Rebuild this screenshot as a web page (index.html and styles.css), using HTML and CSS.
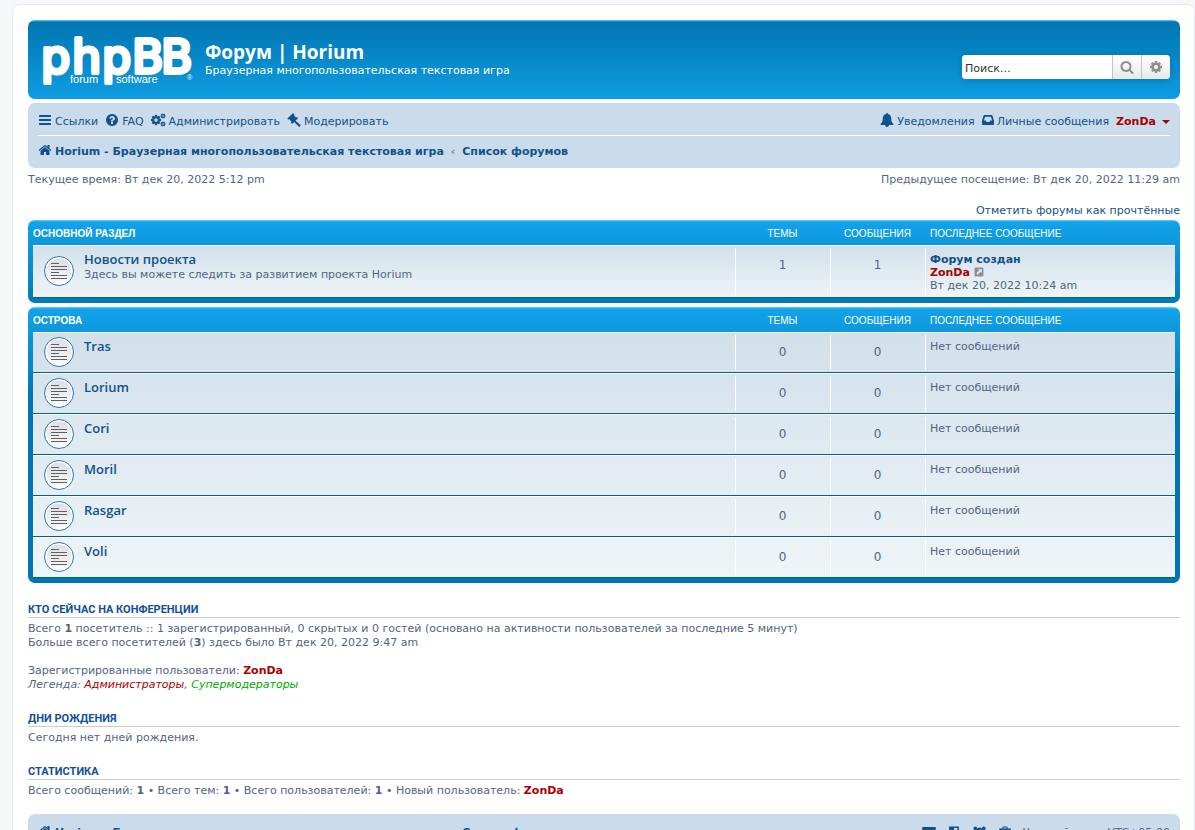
FILE: index.html
```html
<!DOCTYPE html>
<html lang="ru">
<head>
<meta charset="utf-8">
<title>Форум | Horium</title>
<link rel="stylesheet" href="styles.css">
</head>
<body>
<svg class="sprite" aria-hidden="true">
  <symbol id="bars" viewBox="0 0 1792 1792"><path d="M1664 1344v128q0 26-19 45t-45 19h-1408q-26 0-45-19t-19-45v-128q0-26 19-45t45-19h1408q26 0 45 19t19 45zm0-512v128q0 26-19 45t-45 19h-1408q-26 0-45-19t-19-45v-128q0-26 19-45t45-19h1408q26 0 45 19t19 45zm0-512v128q0 26-19 45t-45 19h-1408q-26 0-45-19t-19-45v-128q0-26 19-45t45-19h1408q26 0 45 19t19 45z"/></symbol>
  <symbol id="question" viewBox="0 0 1792 1792"><path d="M1024 1376v-192q0-14-9-23t-23-9h-192q-14 0-23 9t-9 23v192q0 14 9 23t23 9h192q14 0 23-9t9-23zm256-672q0-88-55.500-163t-138.500-116-170-41q-243 0-371 213-15 24 8 42l132 100q7 6 19 6 16 0 25-12 53-68 86-92 34-24 86-24 48 0 85.500 26t37.500 59q0 38-20 61t-68 45q-63 28-115.500 86.500t-52.500 125.500v36q0 14 9 23t23 9h192q14 0 23-9t9-23q0-19 21.500-49.500t54.500-49.500q32-18 49-28.500t46-35 44.500-48 28-60.500 12.500-81zm384 192q0 209-103 385.500t-279.500 279.500-385.500 103-385.500-103-279.500-279.500-103-385.500 103-385.500 279.500-279.500 385.500-103 385.500 103 279.500 279.500 103 385.500z"/></symbol>
  <symbol id="home" viewBox="0 0 1792 1792"><path d="M1472 992v480q0 26-19 45t-45 19h-384v-384h-256v384h-384q-26 0-45-19t-19-45v-480q0-1 .5-3t.5-3l575-474 575 474q1 2 1 6zm223-69l-62 74q-8 9-21 11h-3q-13 0-21-7l-692-577-692 577q-12 8-24 7-13-2-21-11l-62-74q-8-10-7-23.500t11-21.500l719-599q32-26 76-26t76 26l244 204v-195q0-14 9-23t23-9h192q14 0 23 9t9 23v408l219 182q10 8 11 21.500t-7 23.500z"/></symbol>
  <symbol id="search" viewBox="0 0 1792 1792"><path d="M1216 832q0-185-131.500-316.500t-316.500-131.500-316.500 131.500-131.500 316.500 131.500 316.500 316.500 131.500 316.500-131.500 131.500-316.500zm512 832q0 52-38 90t-90 38q-54 0-90-38l-343-342q-179 124-399 124-143 0-273.500-55.500t-225-150-150-225-55.500-273.500 55.500-273.500 150-225 225-150 273.500-55.500 273.500 55.500 225 150 150 225 55.500 273.500q0 220-124 399l343 343q37 37 37 90z"/></symbol>
  <symbol id="cog" viewBox="0 0 1792 1792"><path d="M1152 896q0-106-75-181t-181-75-181 75-75 181 75 181 181 75 181-75 75-181zm512-109v222q0 12-8 23t-20 13l-185 28q-19 54-39 91 35 50 107 138 10 12 10 25t-9 23q-27 37-99 108t-94 71q-12 0-26-9l-138-108q-44 23-91 38-16 136-29 186-7 28-36 28h-222q-14 0-24.500-8.500t-11.500-21.500l-28-184q-49-16-90-37l-141 107q-10 9-25 9-14 0-25-11-126-114-165-168-7-10-7-23 0-12 8-23 15-21 51-66.500t54-70.500q-27-50-41-99l-183-27q-13-2-21-12.500t-8-23.500v-222q0-12 8-23t19-13l186-28q14-46 39-92-40-57-107-138-10-12-10-24 0-10 9-23 26-36 98.500-107.500t94.500-71.500q13 0 26 10l138 107q44-23 91-38 16-136 29-186 7-28 36-28h222q14 0 24.500 8.500t11.500 21.500l28 184q49 16 90 37l142-107q9-9 24-9 13 0 25 10 129 119 165 170 7 8 7 22 0 12-8 23-15 21-51 66.500t-54 70.500q26 50 41 98l183 28q13 2 21 12.500t8 23.500z"/></symbol>
  <symbol id="cogs" viewBox="0 0 15 14">
    <svg x="-1" y="1" width="12" height="12" viewBox="0 0 1792 1792"><use href="#cog"/></svg>
    <svg x="9" y="0" width="6" height="6" viewBox="0 0 1792 1792"><use href="#cog"/></svg>
    <svg x="9" y="8" width="6" height="6" viewBox="0 0 1792 1792"><use href="#cog"/></svg>
  </symbol>
  <symbol id="gavel" viewBox="0 0 14 14"><path d="M0.400 5.600 5.600 0.400a.6.6 0 0 1 .9 0l.6.700a.6.6 0 0 1 0 .9l-.3.300 2.300 2.300.3-.3a.6.6 0 0 1 .9 0l.4.400a.6.6 0 0 1 0 .8L8.500 7.700l4.800 4.100a1 1 0 0 1 0 1.300l-.3.300a1 1 0 0 1-1.300 0L7.200 9l-1.600 1.600a.6.6 0 0 1-.9 0l-.5-.6a.6.6 0 0 1 0-.9l.3-.3L2 5.900l-.3.300a.6.6 0 0 1-.9 0z"/></symbol>
  <symbol id="bell" viewBox="0 0 14 14"><path d="M7 0a.9.900 0 0 1 .9 1c2.200.5 3.300 2.100 3.300 4.200 0 3.200.9 4.600 2.300 5.800 0 .6-.4 1-1 1H9a2 2 0 0 1-4 0H1.500c-.6 0-1-.4-1-1 1.400-1.200 2.300-2.600 2.300-5.800C2.800 3.100 3.900 1.500 6.100 1A.9.900 0 0 1 7 0z"/></symbol>
  <symbol id="inbox" viewBox="0 0 12 14"><path fill-rule="evenodd" d="M2.500 2h7c.5 0 .8.200 1 .7L11.800 7c.1.300.2.500.2.900v3.400c0 .5-.3.800-.8.800H.8a.8.800 0 0 1-.8-.8V7.900c0-.4.100-.600.200-.9l1.300-4.300c.2-.5.500-.7 1-.7zM3.100 3.700 1.900 7.400h1.900l.8 1.600h2.800l.8-1.600h1.900L8.900 3.700z"/></symbol>
  <symbol id="envelope" viewBox="0 0 14 14"><path d="M0 2.500C0 1.600.6 1 1.300 1h11.400c.7 0 1.300.6 1.300 1.500 0 .8-.6 1.600-1.300 2.100L8.300 7.700c-.9.600-1.700.6-2.600 0L1.300 4.600C.6 4.100 0 3.300 0 2.500zM0 5l5 3.600c1.400.9 2.600.9 4 0L14 5v6.700c0 .7-.6 1.300-1.300 1.300H1.300C.6 13 0 12.400 0 11.700z"/></symbol>
  <symbol id="shield" viewBox="0 0 14 14"><path fill-rule="evenodd" d="M2 0.500h10v7c0 3-2.500 5-5 6.500-2.500-1.500-5-3.500-5-6.500zm5 1.600v9.900c2-1.200 3.400-2.600 3.400-4.500V2.100z"/></symbol>
  <symbol id="users" viewBox="0 0 16 14"><circle cx="3.500" cy="2" r="2"/><circle cx="12.500" cy="2" r="2"/><circle cx="8" cy="4" r="3"/><path d="M0 6.500C0 5 .6 4 1.500 4 2.500 4.800 3.500 5 4.500 4.700 4.500 6 5 6.800 5.300 7H1.500C.6 7 0 7 0 6.500zM16 6.500C16 5 15.400 4 14.500 4c-1 .8-2 1-3 .7 0 1.300-.5 2.100-.8 2.300h3.800c.9 0 1.500 0 1.500-.5zM5 7.500c2 1.300 4 1.300 6 0 1.700 0 2.500 2 2.500 4.500 0 1.200-.7 2-2 2h-7c-1.300 0-2-.8-2-2 0-2.500.8-4.500 2.500-4.500z"/></symbol>
  <symbol id="trash" viewBox="0 0 14 14"><path fill-rule="evenodd" d="M5 .5h4l1 2h3v1.200h-1V12c0 1-.6 1.700-1.300 1.700H3.300C2.600 13.700 2 13 2 12V3.700H1V2.500h3zM5.700 1.500l-.5 1h3.600l-.5-1zM4.500 5.500v6h1v-6zm2 0v6h1v-6zm2 0v6h1v-6z"/></symbol>
  <symbol id="goto" viewBox="0 0 10 10"><path fill-rule="evenodd" d="M2 .5h6c.9 0 1.500.6 1.500 1.500v6c0 .9-.6 1.500-1.500 1.500H2C1.100 9.500.5 8.900.5 8V2C.5 1.100 1.100.5 2 .5zM4 2.200l1.200 1.200L2.300 6.300l1.400 1.400 2.900-2.900L7.800 6V2.200z"/></symbol>
  <symbol id="topic" viewBox="0 0 30 30">
    <circle cx="15" cy="15" r="14.500" fill="#fff" stroke="#2b75b5"/>
    <circle cx="15" cy="15" r="12.500" fill="url(#disc)"/>
    <path d="M7 7.500h8M7 10.500h16M7 13.500h16M7 16.500h8M7 19.500h16M7 22.500h16" stroke="#606060"/>
  </symbol>
  <linearGradient id="disc" x1="0" y1="0" x2="0" y2="1"><stop offset="0" stop-color="#dcdee4"/><stop offset="1" stop-color="#fbfbfc"/></linearGradient>
</svg>

<div class="wrap">
  <header class="headerbar">
    <a class="logo" href="#" aria-label="phpBB forum software">
      <svg width="152" height="52" viewBox="0 0 152 52">
        <text class="logo-name" x="-1 30 60 90 119" y="39">phpBB</text>
        <text class="logo-sub" x="28" y="49">forum</text>
        <text class="logo-sub" x="74" y="49">software</text>
        <text class="logo-reg" x="145" y="46">®</text>
      </svg>
    </a>
    <div class="site">
      <h1>Форум | Horium</h1>
      <p>Браузерная многопользовательская текстовая игра</p>
    </div>
    <form class="search">
      <input type="search" placeholder="Поиск…" aria-label="Поиск">
      <button type="button" aria-label="Поиск"><svg><use href="#search"/></svg></button>
      <button type="button" aria-label="Расширенный поиск"><svg><use href="#cog"/></svg></button>
    </form>
  </header>

  <nav class="navbar">
    <div class="nav-row nav-main">
      <a href="#"><svg><use href="#bars"/></svg>Ссылки</a>
      <a href="#"><svg><use href="#question"/></svg>FAQ</a>
      <a href="#"><svg class="wide"><use href="#cogs"/></svg>Администрировать</a>
      <a href="#"><svg><use href="#gavel"/></svg>Модерировать</a>
      <a href="#" class="push"><svg><use href="#bell"/></svg>Уведомления</a>
      <a href="#"><svg class="narrow"><use href="#inbox"/></svg>Личные сообщения</a>
      <a href="#" class="admin menu">ZonDa</a>
    </div>
    <div class="nav-row crumbs">
      <a href="#"><svg><use href="#home"/></svg>Horium - Браузерная многопользовательская текстовая игра</a>
      <span>‹</span>
      <a href="#">Список форумов</a>
    </div>
  </nav>

  <div class="times"><p>Текущее время: Вт дек 20, 2022 5:12 pm</p><p>Предыдущее посещение: Вт дек 20, 2022 11:29 am</p></div>
  <div class="actions"><a href="#">Отметить форумы как прочтённые</a></div>

  <main>
    <div class="forabg">
      <table>
        <colgroup><col class="c-icon"><col><col class="c-num"><col class="c-num"><col class="c-last"></colgroup>
        <thead><tr><th colspan="2" class="name">Основной раздел</th><th>Темы</th><th>Сообщения</th><th class="last">Последнее сообщение</th></tr></thead>
        <tbody>
          <tr class="tall"><td class="icon"><svg><use href="#topic"/></svg></td><td><a class="forum" href="#">Новости проекта</a><p>Здесь вы можете следить за развитием проекта Horium</p></td><td class="num">1</td><td class="num">1</td><td class="last"><a class="strong" href="#">Форум создан</a><br><a class="admin" href="#">ZonDa</a> <a class="goto" href="#" aria-label="Перейти к последнему сообщению"><svg><use href="#goto"/></svg></a><br>Вт дек 20, 2022 10:24 am</td></tr>
        </tbody>
      </table>
    </div>
    <div class="forabg">
      <table>
        <colgroup><col class="c-icon"><col><col class="c-num"><col class="c-num"><col class="c-last"></colgroup>
        <thead><tr><th colspan="2" class="name">Острова</th><th>Темы</th><th>Сообщения</th><th class="last">Последнее сообщение</th></tr></thead>
        <tbody>
          <tr><td class="icon"><svg><use href="#topic"/></svg></td><td><a class="forum" href="#">Tras</a></td><td class="num">0</td><td class="num">0</td><td class="last">Нет сообщений</td></tr>
          <tr><td class="icon"><svg><use href="#topic"/></svg></td><td><a class="forum" href="#">Lorium</a></td><td class="num">0</td><td class="num">0</td><td class="last">Нет сообщений</td></tr>
          <tr><td class="icon"><svg><use href="#topic"/></svg></td><td><a class="forum" href="#">Cori</a></td><td class="num">0</td><td class="num">0</td><td class="last">Нет сообщений</td></tr>
          <tr><td class="icon"><svg><use href="#topic"/></svg></td><td><a class="forum" href="#">Moril</a></td><td class="num">0</td><td class="num">0</td><td class="last">Нет сообщений</td></tr>
          <tr><td class="icon"><svg><use href="#topic"/></svg></td><td><a class="forum" href="#">Rasgar</a></td><td class="num">0</td><td class="num">0</td><td class="last">Нет сообщений</td></tr>
          <tr><td class="icon"><svg><use href="#topic"/></svg></td><td><a class="forum" href="#">Voli</a></td><td class="num">0</td><td class="num">0</td><td class="last">Нет сообщений</td></tr>
        </tbody>
      </table>
    </div>

    <section class="info">
      <h3>Кто сейчас на конференции</h3>
      <p>Всего <strong>1</strong> посетитель :: 1 зарегистрированный, 0 скрытых и 0 гостей (основано на активности пользователей за последние 5 минут)<br>Больше всего посетителей (<strong>3</strong>) здесь было Вт дек 20, 2022 9:47 am</p>
      <p>Зарегистрированные пользователи: <a class="admin" href="#">ZonDa</a><br><em>Легенда: <a class="role-admin" href="#">Администраторы</a>, <a class="role-mod" href="#">Супермодераторы</a></em></p>
    </section>
    <section class="info">
      <h3>Дни рождения</h3>
      <p>Сегодня нет дней рождения.</p>
    </section>
    <section class="info">
      <h3>Статистика</h3>
      <p>Всего сообщений: <strong>1</strong> • Всего тем: <strong>1</strong> • Всего пользователей: <strong>1</strong> • Новый пользователь: <a class="admin" href="#">ZonDa</a></p>
    </section>
  </main>

  <footer class="navbar foot">
    <div class="nav-row crumbs">
      <a href="#"><svg><use href="#home"/></svg>Horium - Браузерная многопользовательская текстовая игра</a>
      <span>‹</span>
      <a href="#">Список форумов</a>
      <div class="tools">
        <a href="#" aria-label="Связаться с администрацией"><svg><use href="#envelope"/></svg></a>
        <a href="#" aria-label="Наша команда"><svg><use href="#shield"/></svg></a>
        <a href="#" aria-label="Пользователи"><svg class="wide"><use href="#users"/></svg></a>
        <a href="#" aria-label="Удалить cookies"><svg><use href="#trash"/></svg></a>
        <span>Часовой пояс: UTC+05:00</span>
      </div>
    </div>
  </footer>
</div>
</body>
</html>
```

FILE: styles.css
```css
* { box-sizing: border-box; }

body {
  margin: 0;
  height: 100vh;
  overflow: hidden;
  background: #f5f7fa;
  color: #536482;
  font: 11px/14px "DejaVu Sans", sans-serif;
}

h1, h3, p { margin: 0; }
a { color: #105289; text-decoration: none; }
svg { fill: currentColor; }
.sprite { position: absolute; width: 0; height: 0; }

.wrap {
  margin: 4px 0 0 12px;
  padding: 15px 14px 15px 15px;
  background: #fff;
  border: 1px solid #e6e9ed;
  border-radius: 8px;
}

.headerbar {
  display: flex;
  align-items: center;
  height: 79px;
  margin-bottom: 4px;
  padding: 0 10px 0 14px;
  border-radius: 7px;
  background: linear-gradient(#6aceff 0, #0076b1 2px, #12a3eb 92px);
  color: #fff;
}

.logo { display: flex; margin-right: 11px; color: #fff; }
.logo svg { overflow: visible; }
.logo-name {
  font: 46px "DejaVu Sans", sans-serif;
  stroke: #fff;
  stroke-width: 4px;
  stroke-linejoin: round;
}
.logo-sub { font: 11px "Liberation Sans", sans-serif; }
.logo-reg { font: 7px "Liberation Sans", sans-serif; }

.site { padding-bottom: 1px; }
.site h1 { font: bold 19px/24px "Open Sans", sans-serif; }
.site p { line-height: 14px; }

.search {
  display: flex;
  margin: 15px 0 0 auto;
  height: 24px;
  border-radius: 4px;
  overflow: hidden;
  background: #fff;
  box-shadow: 0 0 10px #0075b0;
}
.search input {
  width: 150px;
  padding: 3px 3px 0;
  border: 0;
  outline: 0;
  background: #fff;
  color: #333;
  font: inherit;
}
.search input::placeholder { color: #333; }
.search button {
  display: grid;
  place-items: center;
  width: 29px;
  padding: 0;
  border: 0;
  border-left: 1px solid #c7c3bf;
  background: linear-gradient(#fff, #e9e9e9);
  color: #8f8f8f;
}
.search button svg { width: 14px; height: 14px; }

.navbar { padding: 3px 10px; border-radius: 7px; background: #cadceb; }
.nav-row {
  display: flex;
  align-items: center;
  gap: 7px;
  height: 29px;
  padding-top: 2px;
  line-height: 17px;
}
.nav-row a { display: flex; align-items: flex-start; gap: 3px; }
.nav-row svg { width: 14px; height: 14px; }
.nav-row svg.wide { width: 15px; }
.nav-row svg.narrow { width: 12px; }
.nav-main { height: 30px; border-bottom: 1px solid #fff; }
.push { margin-left: auto; }
.admin { color: #a00; font-weight: bold; }
.nav-row .menu { align-items: center; }
.menu::after {
  content: "";
  margin-left: 3px;
  border: 4px solid transparent;
  border-top-color: #a00;
  border-bottom: 0;
}
.crumbs > a { font-weight: bold; }

.times { display: flex; justify-content: space-between; padding-top: 5px; }
.actions { margin: 17px 0 2px; text-align: right; }

.forabg {
  margin-bottom: 4px;
  padding: 0 5px 5px;
  border-radius: 7px;
  background: #0076b1 linear-gradient(#6aceff 0, #12a3eb 2px, #0076b1 92px) no-repeat;
}
table { width: 100%; table-layout: fixed; border-spacing: 0; }
.c-icon { width: 51px; }
.c-num { width: 95px; }
.c-last { width: 250px; }
th {
  height: 25px;
  padding: 2px 0 0;
  color: #fff;
  font: 10px/12px "Liberation Sans", sans-serif;
  text-transform: uppercase;
}
th.name { font-weight: bold; text-align: left; }
th.last { padding-left: 5px; text-align: left; }
tbody { background: linear-gradient(#d2e0eb, #eef5f7); }
td {
  height: 41px;
  padding: 6px 0 0;
  border-top: 1px solid #fff;
  border-bottom: 1px solid #00608f;
  vertical-align: top;
}
.tall td { height: 53px; }
td.icon { padding: 0 0 2px 11px; vertical-align: middle; }
td.icon svg { display: block; width: 30px; height: 30px; }
td.num, td.last { background: linear-gradient(#fff, #fff) 0 2px / 1px calc(100% - 4px) no-repeat; }
td.num { padding-top: 12px; font-size: 12px; text-align: center; }
td.last { padding: 7px 0 0 5px; line-height: 13px; }
.forum { display: block; margin-bottom: 1px; font: 600 13px/15px "Open Sans", sans-serif; }
.strong { font-weight: bold; }
.goto svg { width: 10px; height: 10px; color: #8f8f8f; vertical-align: -1px; margin-left: 1px; }

.info h3 {
  margin: 20px 0 4px;
  border-bottom: 1px solid #ccc;
  color: #115098;
  font: bold 11px/14px Roboto, sans-serif;
  text-transform: uppercase;
}
.info p + p { margin-top: 14px; }
.info .role-admin { color: #a00; }
.info .role-mod { color: #0a0; }

.foot { margin-top: 16px; }
.tools { display: flex; align-items: center; gap: 11px; margin-left: auto; }
```
